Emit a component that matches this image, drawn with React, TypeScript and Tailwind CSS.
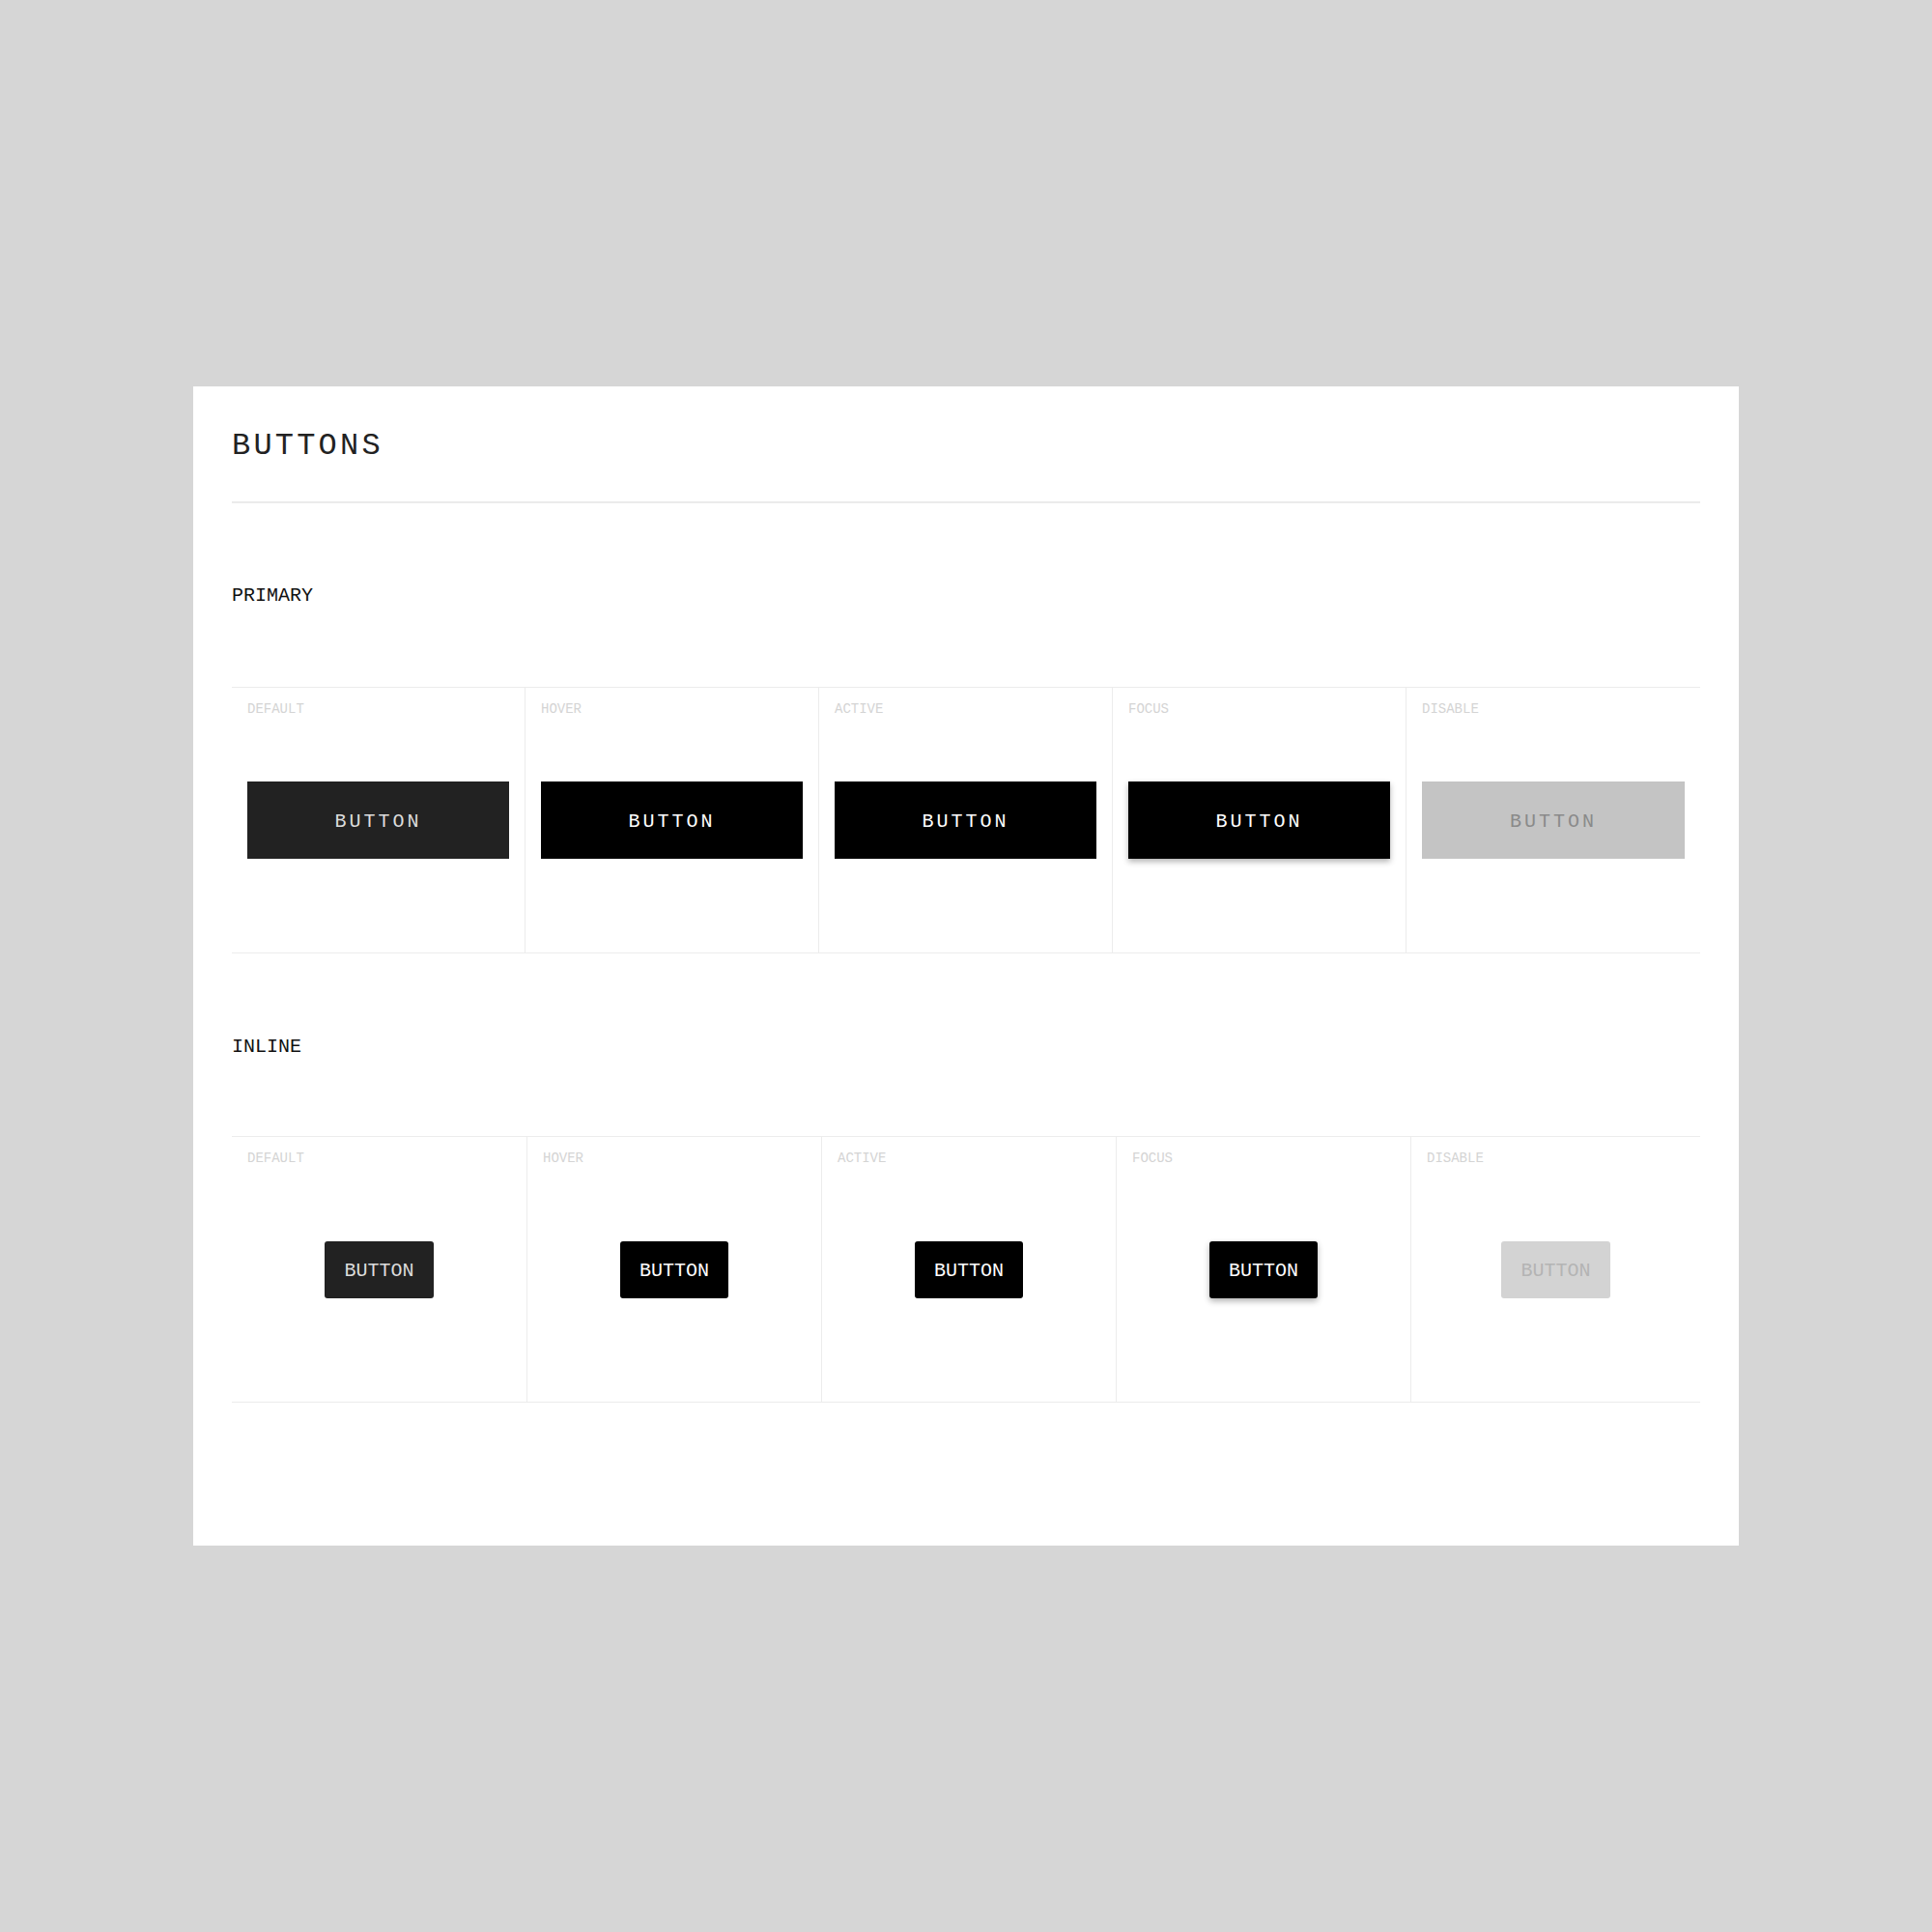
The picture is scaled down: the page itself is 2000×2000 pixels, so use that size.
import React from "react";

const states = ["DEFAULT", "HOVER", "ACTIVE", "FOCUS", "DISABLE"];

const primaryCls: Record<string, string> = {
  DEFAULT: "bg-[#222222] text-[#dcdcdc]",
  HOVER: "bg-black text-white",
  ACTIVE: "bg-black text-white",
  FOCUS: "bg-black text-white shadow-[0_3px_6px_rgba(0,0,0,0.3)]",
  DISABLE: "bg-[#c4c4c4] text-[#8a8a8a]",
};

const inlineCls: Record<string, string> = {
  DEFAULT: "bg-[#222222] text-[#dcdcdc]",
  HOVER: "bg-black text-white",
  ACTIVE: "bg-black text-white",
  FOCUS: "bg-black text-white shadow-[0_3px_6px_rgba(0,0,0,0.3)]",
  DISABLE: "bg-[#d3d3d3] text-[#b4b4b4]",
};

function Cell({ label, last, children }: { label: string; last: boolean; children: React.ReactNode }) {
  return (
    <div className={`relative flex h-[274px] items-center justify-center px-4 ${last ? "" : "border-r border-[#ececec]"}`}>
      <span className="absolute left-4 top-[15px] text-[14px] leading-[14px] text-[#d4d4d4]">{label}</span>
      {children}
    </div>
  );
}

export default function App() {
  return (
    <div className="flex min-h-[2000px] w-full items-start justify-center bg-[#d6d6d6] pt-[400px] [font-family:'Liberation_Mono','DejaVu_Sans_Mono',monospace]">
      <div className="w-[1600px] h-[1200px] bg-white px-10 pt-[42px]">
        <h1 className="text-[32px] leading-[40px] tracking-[3.2px] text-[#222222]">BUTTONS</h1>
        <div className="mt-[37px] h-[2px] bg-[#ebebeb]" />

        <div className="mt-[86px] text-[20px] leading-[20px] text-[#111111]">PRIMARY</div>
        <div className="mt-[84px] grid grid-cols-5 border-y border-[#ececec]">
          {states.map((s, i) => (
            <Cell key={s} label={s} last={i === 4}>
              <div className={`flex h-[80px] w-full items-center justify-center pt-[3px] text-[20px] tracking-[3px] ${primaryCls[s]}`}>
                BUTTON
              </div>
            </Cell>
          ))}
        </div>

        <div className="mt-[87px] text-[20px] leading-[20px] text-[#111111]">INLINE</div>
        <div className="mt-[82px] grid grid-cols-[306px_305px_305px_305px_1fr] border-y border-[#ececec]">
          {states.map((s, i) => (
            <Cell key={s} label={s} last={i === 4}>
              <div className={`flex h-[59px] items-center justify-center rounded-[3px] px-5 pt-[4px] text-[20px] ${inlineCls[s]}`}>
                BUTTON
              </div>
            </Cell>
          ))}
        </div>
      </div>
    </div>
  );
}
